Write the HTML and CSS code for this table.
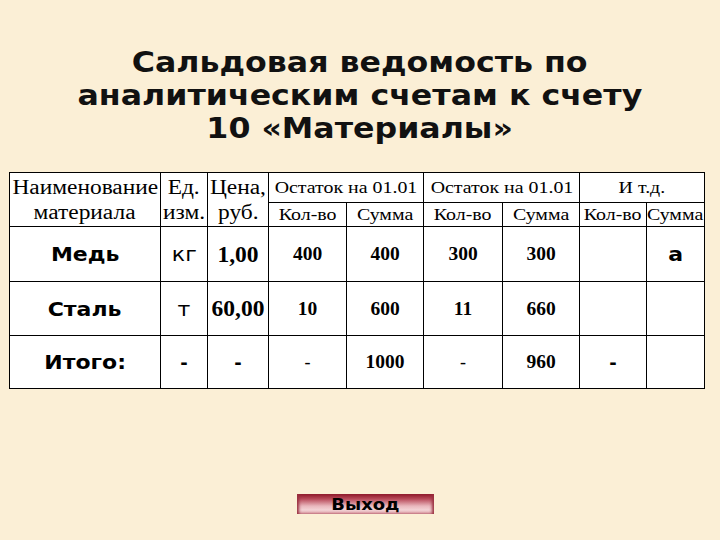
FILE: index.html
```html
<!DOCTYPE html>
<html lang="ru">
<head>
<meta charset="utf-8">
<link rel="stylesheet" href="styles.css">
</head>
<body>
<div class="page">
  <h1 class="title"><span class="w">Сальдовая ведомость по</span><br><span class="w">аналитическим счетам к счету</span><br><span class="w">10 «Материалы»</span></h1>
  <table class="sheet">
    <colgroup>
      <col class="c1"><col class="c2"><col class="c3">
      <col class="c4"><col class="c5"><col class="c6">
      <col class="c7"><col class="c8"><col class="c9">
    </colgroup>
    <tr class="h1">
      <th rowspan="2" class="hbig"><span class="w">Наименование</span><br><span class="w">материала</span></th>
      <th rowspan="2" class="hbig"><span class="w">Ед.</span><br><span class="w">изм.</span></th>
      <th rowspan="2" class="hbig"><span class="w">Цена,</span><br><span class="w">руб.</span></th>
      <th colspan="2" class="hsm"><span class="w">Остаток на 01.01</span></th>
      <th colspan="2" class="hsm"><span class="w">Остаток на 01.01</span></th>
      <th colspan="2" class="hsm"><span class="w">И т.д.</span></th>
    </tr>
    <tr class="h2">
      <th class="hsm"><span class="w">Кол-во</span></th><th class="hsm"><span class="w">Сумма</span></th>
      <th class="hsm"><span class="w">Кол-во</span></th><th class="hsm"><span class="w">Сумма</span></th>
      <th class="hsm"><span class="w">Кол-во</span></th><th class="hsm"><span class="w">Сумма</span></th>
    </tr>
    <tr class="r1">
      <td class="name"><span class="ws">Медь</span></td>
      <td class="unit"><span class="ws">кг</span></td>
      <td class="price">1,00</td>
      <td class="num">400</td><td class="num">400</td>
      <td class="num">300</td><td class="num">300</td>
      <td></td><td class="name"><span class="ws">а</span></td>
    </tr>
    <tr class="r2">
      <td class="name"><span class="ws">Сталь</span></td>
      <td class="unit"><span class="ws">т</span></td>
      <td class="price">60,00</td>
      <td class="num">10</td><td class="num">600</td>
      <td class="num">11</td><td class="num">660</td>
      <td></td><td></td>
    </tr>
    <tr class="r3">
      <td class="name total"><span class="ws">Итого:</span></td>
      <td class="dash">-</td>
      <td class="dash">-</td>
      <td class="thin">-</td><td class="num">1000</td>
      <td class="thin">-</td><td class="num">960</td>
      <td class="dash">-</td><td></td>
    </tr>
  </table>
  <div class="actions"><span class="btn"><span class="wb">Выход</span></span></div>
</div>
</body>
</html>
```
FILE: styles.css
```css
html, body {
  margin: 0;
  padding: 0;
}
body {
  background: #fbefd6;
  width: 720px;
  height: 540px;
  overflow: hidden;
}
.page {
  display: flex;
  flex-direction: column;
  padding-top: 46px;
}
.w {
  display: inline-block;
  transform: scaleX(1.17);
}
.ws {
  display: inline-block;
  transform: scaleX(1.1);
}
.wb {
  display: inline-block;
  transform: scaleX(1.12);
}
.title {
  margin: 0;
  font-family: "DejaVu Sans", Verdana, sans-serif;
  font-weight: bold;
  font-size: 28px;
  line-height: 33px;
  text-align: center;
  color: #111;
}
.title .w {
  transform: scaleX(1.13);
}
.sheet {
  margin: 27px 0 0 9px;
  border-collapse: collapse;
  table-layout: fixed;
  width: 695px;
  background: #fff;
}
.c1 { width: 151px; }
.c2 { width: 47px; }
.c3 { width: 61px; }
.c4 { width: 78px; }
.c5 { width: 77px; }
.c6 { width: 79px; }
.c7 { width: 77px; }
.c8 { width: 67px; }
.c9 { width: 58px; }
.sheet th, .sheet td {
  border: 1.5px solid #000;
  padding: 0;
  text-align: center;
  vertical-align: middle;
  color: #000;
  white-space: nowrap;
}
.hbig {
  font-family: "Liberation Serif", "Times New Roman", serif;
  font-weight: normal;
  font-size: 20px;
  line-height: 25px;
}
.hsm {
  font-family: "Liberation Serif", "Times New Roman", serif;
  font-weight: normal;
  font-size: 17px;
}
.h1 { height: 30px; }
.h2 { height: 24px; }
.r1 { height: 55px; }
.r2 { height: 54px; }
.r3 { height: 53px; }
.name {
  font-family: "DejaVu Sans", Verdana, sans-serif;
  font-weight: bold;
  font-size: 20px;
}
.total { color: #4a0c12; }
.unit {
  font-family: "DejaVu Sans", Verdana, sans-serif;
  font-size: 20px;
}
.price {
  font-family: "Liberation Serif", "Times New Roman", serif;
  font-weight: bold;
  font-size: 23.5px;
}
.num {
  font-family: "Liberation Serif", "Times New Roman", serif;
  font-weight: bold;
  font-size: 19.5px;
}
.dash {
  font-family: "DejaVu Sans", Verdana, sans-serif;
  font-weight: bold;
  font-size: 18px;
}
.thin {
  font-family: "Liberation Serif", "Times New Roman", serif;
  font-size: 18px;
}
.actions {
  display: flex;
  justify-content: center;
  margin-top: 105px;
  padding-left: 11px;
}
.btn {
  width: 137px;
  height: 20px;
  display: flex;
  align-items: flex-end;
  justify-content: center;
  font-family: "DejaVu Sans", Verdana, sans-serif;
  font-weight: bold;
  font-size: 16px;
  line-height: 19px;
  color: #000;
  background: linear-gradient(to bottom, #8e1828 0%, #b84a5a 25%, #e9b7bd 60%, #f3d3d6 80%, #d99aa2 100%);
  box-shadow: inset 3px 0 3px -1px #9a3040, inset -3px 0 3px -1px #9a3040;
}
```
